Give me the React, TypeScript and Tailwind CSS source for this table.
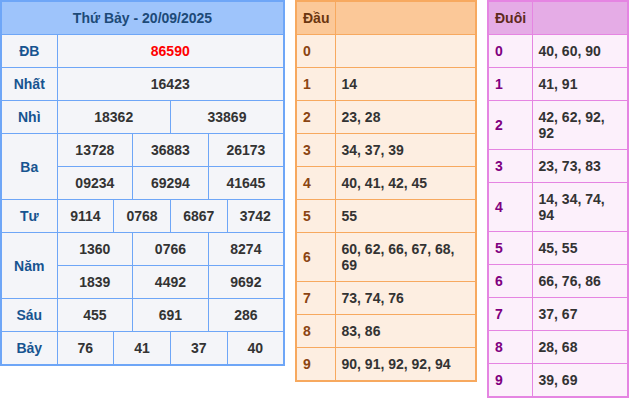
// Kết quả xổ số — bảng giải + bảng Đầu / Đuôi

const FONT = "font-['Liberation_Sans',Arial,sans-serif]";

type Prize = { label: string; rows: string[][] };

const PRIZES: Prize[] = [
  { label: "ĐB", rows: [["86590"]] },
  { label: "Nhất", rows: [["16423"]] },
  { label: "Nhì", rows: [["18362", "33869"]] },
  { label: "Ba", rows: [["13728", "36883", "26173"], ["09234", "69294", "41645"]] },
  { label: "Tư", rows: [["9114", "0768", "6867", "3742"]] },
  { label: "Năm", rows: [["1360", "0766", "8274"], ["1839", "4492", "9692"]] },
  { label: "Sáu", rows: [["455", "691", "286"]] },
  { label: "Bảy", rows: [["76", "41", "37", "40"]] },
];

const DAU = [
  "",
  "14",
  "23, 28",
  "34, 37, 39",
  "40, 41, 42, 45",
  "55",
  "60, 62, 66, 67, 68, 69",
  "73, 74, 76",
  "83, 86",
  "90, 91, 92, 92, 94",
];

const DUOI = [
  "40, 60, 90",
  "41, 91",
  "42, 62, 92, 92",
  "23, 73, 83",
  "14, 34, 74, 94",
  "45, 55",
  "66, 76, 86",
  "37, 67",
  "28, 68",
  "39, 69",
];

function PrizeTable() {
  const cell = "border border-[#6ea6f7] py-2 leading-4 text-center";
  return (
    <table className="w-[285px] table-fixed border-collapse border-2 border-[#6ea6f7] bg-[#f4f5f9] text-[14px] font-bold">
      <colgroup>
        <col className="w-[56px]" />
        {Array.from({ length: 12 }).map((_, i) => (
          <col key={i} />
        ))}
      </colgroup>
      <thead>
        <tr>
          <th colSpan={13} className={`${cell} bg-[#9ec4fb] text-[#1d4a78]`}>
            Thứ Bảy - 20/09/2025
          </th>
        </tr>
      </thead>
      <tbody>
        {PRIZES.map((p) =>
          p.rows.map((nums, ri) => (
            <tr key={p.label + ri}>
              {ri === 0 && (
                <td rowSpan={p.rows.length} className={`${cell} text-[#175490]`}>
                  {p.label}
                </td>
              )}
              {nums.map((n, i) => (
                <td
                  key={i}
                  colSpan={12 / nums.length}
                  className={`${cell} ${p.label === "ĐB" ? "text-[#ff0000]" : "text-[#333333]"}`}
                >
                  {n}
                </td>
              ))}
            </tr>
          )),
        )}
      </tbody>
    </table>
  );
}

interface LotoProps {
  title: string;
  items: string[];
  width: string;
  labelWidth: string;
  border: string;
  head: string;
  body: string;
  titleColor: string;
  digitColor: string;
}

function LotoTable({ title, items, width, labelWidth, border, head, body, titleColor, digitColor }: LotoProps) {
  const cell = `border ${border} px-[6px] py-2 leading-4 text-left align-middle`;
  return (
    <table className={`${width} table-fixed border-collapse border-2 ${border} ${body} text-[14px] font-bold`}>
      <colgroup>
        <col className={labelWidth} />
        <col />
      </colgroup>
      <thead>
        <tr className={head}>
          <th className={`${cell} ${titleColor}`}>{title}</th>
          <th className={cell}>&nbsp;</th>
        </tr>
      </thead>
      <tbody>
        {items.map((v, i) => (
          <tr key={i}>
            <td className={`${cell} ${digitColor}`}>{i}</td>
            <td className={`${cell} text-[#333333]`}>{v || "\u00a0"}</td>
          </tr>
        ))}
      </tbody>
    </table>
  );
}

export default function App() {
  return (
    <div className={`flex items-start gap-[10px] bg-white ${FONT}`}>
      <PrizeTable />
      <LotoTable
        title="Đầu"
        items={DAU}
        width="w-[182px]"
        labelWidth="w-[39px]"
        border="border-[#f7a95f]"
        head="bg-[#fbc898]"
        body="bg-[#fdeee1]"
        titleColor="text-[#6b3610]"
        digitColor="text-[#8b4513]"
      />
      <LotoTable
        title="Đuôi"
        items={DUOI}
        width="w-[142px]"
        labelWidth="w-[44px]"
        border="border-[#e585e2]"
        head="bg-[#e5ace6]"
        body="bg-[#fcf0fb]"
        titleColor="text-[#5e2a1c]"
        digitColor="text-[#800080]"
      />
    </div>
  );
}
